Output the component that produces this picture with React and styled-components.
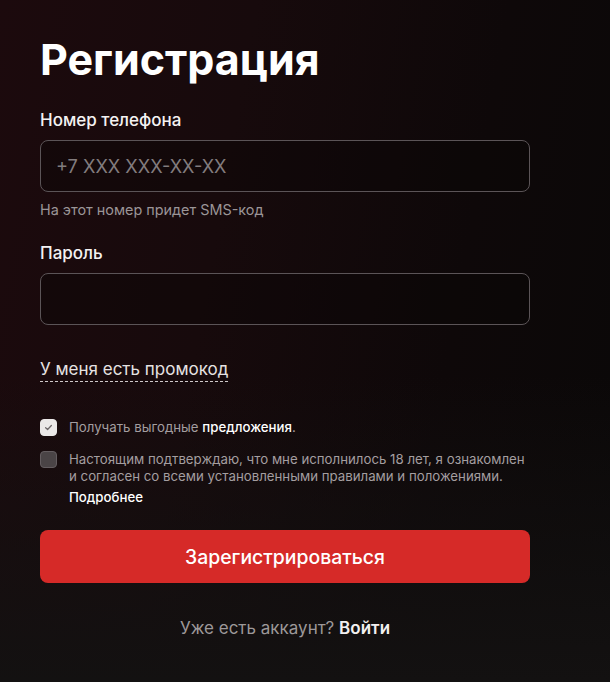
import React, { useState } from "react";
import styled, { createGlobalStyle } from "styled-components";

const FONT = `Inter, "Liberation Sans", sans-serif`;

const GlobalStyle = createGlobalStyle`
  html, body {
    margin: 0;
    padding: 0;
  }
  body {
    min-height: 682px;
    font-family: ${FONT};
    color: #fff;
    background:
      linear-gradient(to bottom, rgba(19, 17, 17, 0) 55%, #131111 100%),
      linear-gradient(100deg, #1c0a0d 0%, #170a0c 35%, #0e0809 70%, #0a0808 100%);
    background-color: #0f0b0c;
  }
`;

const SPage = styled.div`
  min-height: 682px;
  box-sizing: border-box;
  padding: 34px 80px 40px 40px;
`;

const SForm = styled.form`
  width: 490px;
  display: flex;
  flex-direction: column;
`;

const STitle = styled.h1`
  margin: 0 0 26px;
  font-family: ${FONT};
  font-size: 43px;
  line-height: 50px;
  font-weight: 700;
  color: #fff;
`;

const SField = styled.div`
  display: flex;
  flex-direction: column;
  margin-bottom: ${({ $gap }) => $gap || 0}px;
`;

const SLabel = styled.label`
  font-size: 17px;
  line-height: 20px;
  font-weight: 500;
  color: #f4f2f2;
  margin-bottom: 10px;
`;

const SInput = styled.input`
  box-sizing: border-box;
  width: 100%;
  height: 52px;
  padding: 0 15px;
  border: 1px solid #5b5457;
  border-radius: 8px;
  background: rgba(10, 6, 7, 0.35);
  color: #fff;
  font-family: ${FONT};
  font-size: 18.2px;
  outline: none;

  &::placeholder {
    color: #827c7e;
  }
`;

const SHint = styled.div`
  margin-top: 10px;
  font-size: 14.4px;
  line-height: 16px;
  color: #9b9597;
`;

const SPromo = styled.button`
  align-self: flex-start;
  margin: 0 0 37px;
  padding: 0 0 2px;
  border: none;
  border-bottom: 1px dashed #cfcaca;
  background: none;
  color: #e6e2e2;
  font-family: ${FONT};
  font-size: 17px;
  line-height: 20px;
  cursor: pointer;
`;

const SCheckRow = styled.label`
  display: flex;
  align-items: flex-start;
  gap: 12px;
  margin-bottom: ${({ $gap }) => $gap || 0}px;
  cursor: pointer;
`;

const SBox = styled.span`
  flex: none;
  box-sizing: border-box;
  width: 17px;
  height: 17px;
  border-radius: 4px;
  display: flex;
  align-items: center;
  justify-content: center;
  background: ${({ $checked }) => ($checked ? "#ebe8e8" : "#4a4446")};
  border: 1px solid ${({ $checked }) => ($checked ? "#ebe8e8" : "#645d60")};
`;

const SCheckText = styled.div`
  font-family: ${FONT};
  font-size: 13.25px;
  line-height: 17px;
  color: #a49ea0;

  b {
    color: #fff;
    font-weight: 500;
  }
`;

const SMore = styled.div`
  margin-top: 4px;
  color: #fff;
  font-weight: 500;
`;

const SSubmit = styled.button`
  height: 53px;
  margin-top: 24px;
  border: none;
  border-radius: 8px;
  background: #d62a28;
  color: #fff;
  font-family: ${FONT};
  font-size: 19.4px;
  font-weight: 500;
  cursor: pointer;
`;

const SFooter = styled.div`
  margin-top: 35px;
  text-align: center;
  font-size: 17px;
  line-height: 20px;
  color: #9d9899;

  a {
    color: #f2f0f0;
    font-weight: 600;
    text-decoration: none;
  }
`;

const CheckMark = () => (
  <svg width="9" height="9" viewBox="0 0 10 10" fill="none">
    <path d="M1.8 5.2 L4 7.2 L8.2 2.8" stroke="#6c6668" strokeWidth="1.4" strokeLinecap="round" strokeLinejoin="round" />
  </svg>
);

const App = () => {
  const [offers, setOffers] = useState(true);
  const [agree, setAgree] = useState(false);

  return (
    <>
      <GlobalStyle />
      <SPage>
        <SForm onSubmit={(e) => e.preventDefault()}>
          <STitle>Регистрация</STitle>

          <SField $gap={25}>
            <SLabel>Номер телефона</SLabel>
            <SInput placeholder="+7 XXX XXX-XX-XX" />
            <SHint>На этот номер придет SMS-код</SHint>
          </SField>

          <SField $gap={34}>
            <SLabel>Пароль</SLabel>
            <SInput type="password" />
          </SField>

          <SPromo type="button">У меня есть промокод</SPromo>

          <SCheckRow $gap={15} onClick={() => setOffers((v) => !v)}>
            <SBox $checked={offers}>{offers && <CheckMark />}</SBox>
            <SCheckText>
              Получать выгодные <b>предложения</b>.
            </SCheckText>
          </SCheckRow>

          <SCheckRow onClick={() => setAgree((v) => !v)}>
            <SBox $checked={agree}>{agree && <CheckMark />}</SBox>
            <SCheckText>
              Настоящим подтверждаю, что мне исполнилось 18 лет, я ознакомлен
              <br />
              и согласен со всеми установленными правилами и положениями.
              <SMore>Подробнее</SMore>
            </SCheckText>
          </SCheckRow>

          <SSubmit type="submit">Зарегистрироваться</SSubmit>

          <SFooter>
            Уже есть аккаунт? <a href="#">Войти</a>
          </SFooter>
        </SForm>
      </SPage>
    </>
  );
};

export default App;
